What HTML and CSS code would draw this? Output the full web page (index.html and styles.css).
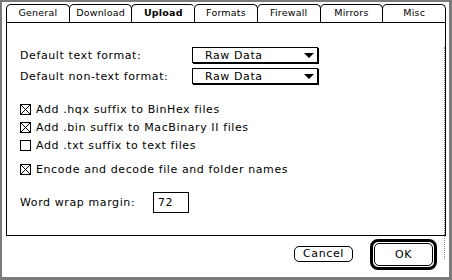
FILE: index.html
```html
<!DOCTYPE html>
<html>
<head>
    <title>Upload Settings</title>
    <link rel="stylesheet" href="styles.css">
</head>
<body>
    <div class="window">
        <div class="tabs">
            <div class="tab">General</div>
            <div class="tab">Download</div>
            <div class="tab tab-active">Upload</div>
            <div class="tab">Formats</div>
            <div class="tab">Firewall</div>
            <div class="tab">Mirrors</div>
            <div class="tab">Misc</div>
        </div>

        <div class="panel">
            <div class="panel-inner">
                <div class="form-row first">
                    <span class="label popup-label">Default text format:</span>
                    <div class="popup">
                        <span>Raw Data</span>
                        <svg class="arrow" width="10" height="5" viewBox="0 0 10 5"><polygon points="0,0 10,0 5,5" fill="#000"/></svg>
                    </div>
                </div>
                <div class="form-row">
                    <span class="label popup-label">Default non-text format:</span>
                    <div class="popup">
                        <span>Raw Data</span>
                        <svg class="arrow" width="10" height="5" viewBox="0 0 10 5"><polygon points="0,0 10,0 5,5" fill="#000"/></svg>
                    </div>
                </div>

                <div class="checks">
                    <div class="check-row">
                        <span class="checkbox checked"><svg width="9" height="9" viewBox="0 0 9 9"><path d="M0 0L9 9M9 0L0 9" stroke="#000" stroke-width="1"/></svg></span>
                        <span>Add .hqx suffix to BinHex files</span>
                    </div>
                    <div class="check-row">
                        <span class="checkbox checked"><svg width="9" height="9" viewBox="0 0 9 9"><path d="M0 0L9 9M9 0L0 9" stroke="#000" stroke-width="1"/></svg></span>
                        <span>Add .bin suffix to MacBinary II files</span>
                    </div>
                    <div class="check-row">
                        <span class="checkbox"></span>
                        <span>Add .txt suffix to text files</span>
                    </div>
                    <div class="check-row spaced">
                        <span class="checkbox checked"><svg width="9" height="9" viewBox="0 0 9 9"><path d="M0 0L9 9M9 0L0 9" stroke="#000" stroke-width="1"/></svg></span>
                        <span>Encode and decode file and folder names</span>
                    </div>
                </div>

                <div class="wrap-row">
                    <span class="label wrap-label">Word wrap margin:</span>
                    <div class="field">72</div>
                </div>
            </div>
        </div>

        <div class="buttons">
            <div class="button">Cancel</div>
            <div class="default-ring">
                <div class="button ok">OK</div>
            </div>
        </div>
    </div>
</body>
</html>
```
FILE: styles.css
```css
body {
    margin: 0;
    font-family: "DejaVu Sans", sans-serif;
    font-size: 11px;
    letter-spacing: 0.6px;
    color: #000;
    background: #fff;
}

/* outer dialog frame */
.window {
    width: 452px;
    height: 280px;
    box-sizing: border-box;
    border: 2px solid #7b7b7b;
    border-right-width: 3px;
    border-bottom-width: 3px;
    padding: 2px 3px 0 4px;
    display: flex;
    flex-direction: column;
}

/* tab strip */
.tabs {
    display: flex;
    height: 18px;
    padding-left: 1px;
}

.tab {
    flex: 1;
    margin-left: -1px;
    border: 1px solid #000;
    border-bottom: none;
    border-radius: 5px 5px 0 0;
    font-size: 9.5px;
    letter-spacing: 0.2px;
    line-height: 16px;
    text-align: center;
}

.tab-active {
    font-weight: bold;
    border-right: 1px dotted #888;
}

/* main panel */
.panel {
    height: 214px;
    box-sizing: border-box;
    border: 1px solid #000;
}

.panel-inner {
    height: 100%;
    box-sizing: border-box;
    border-right: 1px dotted #888;
    padding-left: 13px;
}

.form-row {
    display: flex;
    align-items: center;
    height: 16px;
    margin-top: 5px;
}

.form-row.first {
    margin-top: 24px;
}

.popup-label {
    width: 172px;
}

.popup {
    width: 126px;
    height: 16px;
    box-sizing: border-box;
    border: 1px solid #000;
    box-shadow: 1px 1px 0 #000;
    display: flex;
    align-items: center;
    justify-content: space-between;
    padding: 0 3px 0 12px;
}

.checks {
    margin-top: 16px;
}

.check-row {
    display: flex;
    align-items: center;
    height: 18px;
}

.check-row.spaced {
    margin-top: 6px;
}

.checkbox {
    width: 11px;
    height: 11px;
    box-sizing: border-box;
    border: 1px solid #000;
    margin-right: 5px;
    display: flex;
}

.wrap-row {
    display: flex;
    align-items: center;
    margin-top: 14px;
}

.wrap-label {
    width: 133px;
}

.field {
    width: 36px;
    height: 21px;
    box-sizing: border-box;
    border: 1px solid #000;
    padding-left: 4px;
    line-height: 19px;
}

/* bottom buttons */
.buttons {
    display: flex;
    justify-content: flex-end;
    align-items: center;
    height: 32px;
    padding-top: 2px;
    padding-right: 9px;
}

.button {
    width: 59px;
    height: 16px;
    box-sizing: border-box;
    border: 1px solid #000;
    border-radius: 5px;
    text-align: center;
    line-height: 14px;
}

.default-ring {
    margin-left: 17px;
    border: 3px solid #000;
    border-radius: 8px;
    padding: 1px;
}

.button.ok {
    height: 23px;
    line-height: 21px;
}
```
